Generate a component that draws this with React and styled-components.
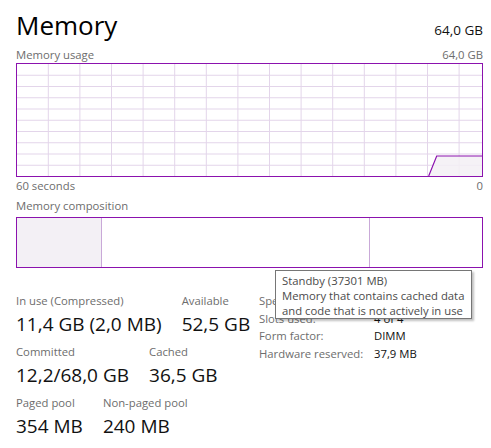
import React from "react";
import styled, { createGlobalStyle } from "styled-components";

const FONT = `"Open Sans", "Noto Sans", "Liberation Sans", sans-serif`;

const GlobalStyle = createGlobalStyle`
  html, body {
    margin: 0;
    padding: 0;
    background: #ffffff;
  }
  body {
    font-family: ${FONT};
    color: #1a1a1a;
  }
`;

const PURPLE = "#8b12ae";
const GRID = "#e3d5ea";
const FILL = "#f3f0f5";

const Page = styled.div`
  position: relative;
  width: 491px;
  height: 448px;
  box-sizing: border-box;
  padding: 8px 8px 0 16px;
  overflow: hidden;
`;

const Header = styled.div`
  display: flex;
  justify-content: space-between;
  align-items: baseline;
  height: 40px;
`;

const Title = styled.h1`
  margin: 0;
  font-size: 26px;
  font-weight: 400;
  line-height: 35px;
  color: #000;
`;

const Total = styled.span`
  font-size: 13.5px;
  color: #111;
`;

const CaptionRow = styled.div`
  display: flex;
  justify-content: space-between;
  align-items: flex-end;
  font-size: 11.3px;
  line-height: 16px;
  height: ${({ $h }) => $h || 16}px;
  color: #6d6d6d;
`;

const ChartBox = styled.div`
  border: 1px solid ${PURPLE};
  height: 112px;
  line-height: 0;
  svg {
    display: block;
  }
`;

const Composition = styled.div`
  display: flex;
  margin-top: 3px;
  border: 1px solid ${PURPLE};
  height: 49px;
`;

const Segment = styled.div`
  width: ${({ $w }) => $w}px;
  flex: ${({ $grow }) => ($grow ? 1 : "none")};
  background: ${({ $filled }) => ($filled ? FILL : "#fff")};
  border-right: ${({ $last }) => ($last ? "none" : "1px solid #c9a9d8")};
`;

const Stats = styled.div`
  display: flex;
  margin-top: 25px;
`;

const LeftStats = styled.div`
  width: 243px;
  display: flex;
  flex-direction: column;
  gap: 7px;
`;

const StatRow = styled.div`
  display: flex;
  gap: 20px;
`;

const Stat = styled.div`
  display: flex;
  flex-direction: column;
  gap: 2px;
`;

const StatLabel = styled.div`
  font-size: 11.3px;
  line-height: 16px;
  color: #6d6d6d;
  white-space: nowrap;
`;

const StatValue = styled.div`
  font-size: 19px;
  line-height: 26px;
  color: #111;
  white-space: nowrap;
`;

const Details = styled.div`
  display: grid;
  grid-template-columns: 115px auto;
  grid-template-rows: repeat(4, 17.7px);
  align-items: center;
  align-self: flex-start;
  font-size: 11.3px;
  line-height: 16px;
  margin-top: -1px;
`;

const DetailKey = styled.span`
  color: #6d6d6d;
  white-space: nowrap;
`;

const DetailValue = styled.span`
  color: #111;
  white-space: nowrap;
`;

const Tooltip = styled.div`
  position: absolute;
  left: 275px;
  top: 270px;
  width: 197px;
  height: 49px;
  box-sizing: border-box;
  padding: 2px 0 0 6px;
  border: 1px solid #767676;
  background: #fff;
  box-shadow: 2px 2px 2px rgba(0, 0, 0, 0.25);
  font-size: 11.3px;
  line-height: 15px;
  color: #4b4b4b;
  white-space: nowrap;
`;

function UsageChart() {
  const w = 465;
  const h = 112;
  const rows = Array.from({ length: 9 }, (_, i) => (i + 1) * 11.25);
  const cols = Array.from({ length: 14 }, (_, i) => 31.3 + i * 31.6);
  return (
    <svg width={w} height={h} viewBox={`0 0 ${w} ${h}`}>
      {rows.map((y) => (
        <line key={"r" + y} x1="0" x2={w} y1={y} y2={y} stroke={GRID} strokeWidth="1" />
      ))}
      {cols.map((x) => (
        <line key={"c" + x} x1={x} x2={x} y1="0" y2={h} stroke={GRID} strokeWidth="1" />
      ))}
      <polygon points={`411.7,${h} 419.7,92 ${w},92 ${w},${h}`} fill={FILL} fillOpacity="0.85" />
      <polyline points={`411.7,${h} 419.7,92 ${w},92`} fill="none" stroke={PURPLE} strokeWidth="1.2" />
    </svg>
  );
}

const stats = [
  [
    { label: "In use (Compressed)", value: "11,4 GB (2,0 MB)" },
    { label: "Available", value: "52,5 GB" },
  ],
  [
    { label: "Committed", value: "12,2/68,0 GB" },
    { label: "Cached", value: "36,5 GB" },
  ],
  [
    { label: "Paged pool", value: "354 MB" },
    { label: "Non-paged pool", value: "240 MB" },
  ],
];

const details = [
  ["Speed:", "2400 MHz"],
  ["Slots used:", "4 of 4"],
  ["Form factor:", "DIMM"],
  ["Hardware reserved:", "37,9 MB"],
];

export default function App() {
  return (
    <>
      <GlobalStyle />
      <Page>
        <Header>
          <Title>Memory</Title>
          <Total>64,0 GB</Total>
        </Header>
        <CaptionRow $h={15}>
          <span>Memory usage</span>
          <span>64,0 GB</span>
        </CaptionRow>
        <ChartBox>
          <UsageChart />
        </ChartBox>
        <CaptionRow $h={17}>
          <span>60 seconds</span>
          <span>0</span>
        </CaptionRow>
        <CaptionRow $h={20}>
          <span>Memory composition</span>
        </CaptionRow>
        <Composition>
          <Segment $w={84} $filled />
          <Segment $w={267} />
          <Segment $grow $last />
        </Composition>
        <Stats>
          <LeftStats>
            {stats.map((row, i) => (
              <StatRow key={i}>
                {row.map((s) => (
                  <Stat key={s.label}>
                    <StatLabel>{s.label}</StatLabel>
                    <StatValue>{s.value}</StatValue>
                  </Stat>
                ))}
              </StatRow>
            ))}
          </LeftStats>
          <Details>
            {details.map(([k, v]) => (
              <React.Fragment key={k}>
                <DetailKey>{k}</DetailKey>
                <DetailValue>{v}</DetailValue>
              </React.Fragment>
            ))}
          </Details>
        </Stats>
        <Tooltip>
          Standby (37301 MB)
          <br />
          Memory that contains cached data
          <br />
          and code that is not actively in use
        </Tooltip>
      </Page>
    </>
  );
}
